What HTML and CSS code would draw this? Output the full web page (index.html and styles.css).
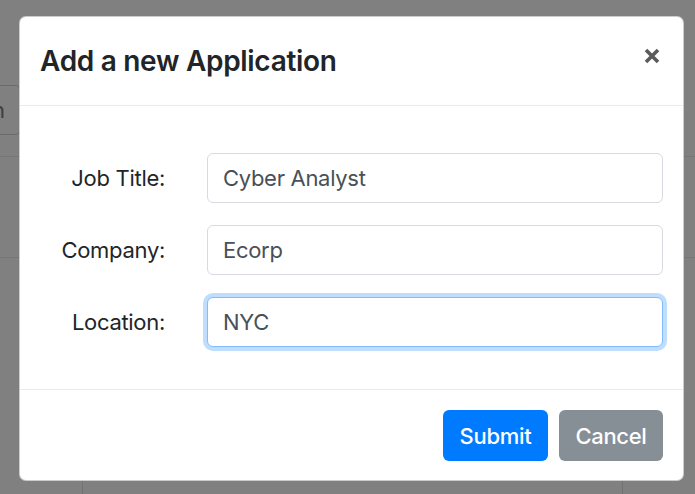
FILE: index.html
```html
<!DOCTYPE html>
<html lang="en">
<head>
<meta charset="utf-8">
<title>Add a new Application</title>
<link rel="stylesheet" href="styles.css">
</head>
<body>
<div class="page">
  <div class="search"><span>n</span></div>
  <div class="row-line first"></div>
  <div class="row-line"></div>
  <div class="table">
    <div class="col"></div>
    <div class="col"></div>
    <div class="col"></div>
  </div>
</div>

<div class="modal">
  <div class="modal-header">
    <h5 class="modal-title">Add a new Application</h5>
    <button class="close" aria-label="Close">
      <svg width="16" height="16" viewBox="0 0 16 16"><path d="M2 2 L14 14 M14 2 L2 14" stroke="#5b5b5b" stroke-width="3.6" stroke-linecap="butt"/></svg>
    </button>
  </div>
  <div class="modal-body">
    <label class="form-label">Job Title:</label>
    <input class="form-control" type="text" value="Cyber Analyst">
    <label class="form-label">Company:</label>
    <input class="form-control" type="text" value="Ecorp">
    <label class="form-label">Location:</label>
    <input class="form-control is-focused" type="text" value="NYC">
  </div>
  <div class="modal-footer">
    <button class="btn btn-primary">Submit</button>
    <button class="btn btn-secondary">Cancel</button>
  </div>
</div>
</body>
</html>
```

FILE: styles.css
```css
html, body {
  margin: 0;
  padding: 0;
}
body {
  width: 695px;
  height: 494px;
  overflow: hidden;
  background: #808080;
  font-family: Inter, "Liberation Sans", sans-serif;
  position: relative;
}

/* dimmed page behind the modal */
.page {
  display: flex;
  flex-direction: column;
  height: 494px;
  padding-top: 85px;
  box-sizing: border-box;
}
.search {
  margin-left: -60px;
  width: 80px;
  height: 50px;
  box-sizing: border-box;
  border: 1px solid #686b6e;
  border-radius: 4px;
  display: flex;
  align-items: center;
  justify-content: flex-end;
  padding-right: 14px;
  font-size: 22px;
  color: #3c3f42;
}
.row-line {
  height: 1px;
  background: #767676;
  margin-top: 100px;
}
.row-line.first {
  margin-top: 21px;
}
.table {
  flex: 1;
  display: grid;
  grid-template-columns: 82px 540px 1fr;
}
.table .col + .col {
  border-left: 1px solid #727272;
}

/* modal */
.modal {
  position: absolute;
  left: 19px;
  top: 16px;
  width: 665px;
  box-sizing: border-box;
  background: #fff;
  border: 1px solid rgba(0, 0, 0, 0.2);
  border-radius: 7px;
  color: #212529;
}
.modal-header {
  display: flex;
  align-items: center;
  justify-content: space-between;
  padding: 23px 23px 23px 20px;
  border-bottom: 1px solid #e9ecef;
}
.modal-title {
  margin: 0;
  font-size: 28px;
  line-height: 42px;
  font-weight: 600;
  color: #212529;
  letter-spacing: -0.3px;
}
.close {
  border: 0;
  background: transparent;
  padding: 0;
  width: 16px;
  height: 16px;
  display: flex;
  margin-top: -10px;
}

.modal-body {
  display: grid;
  grid-template-columns: 125px 456px;
  column-gap: 42px;
  row-gap: 22px;
  align-items: center;
  padding: 47px 20px 42px 20px;
}
.form-label {
  text-align: right;
  font-size: 22px;
  color: #212529;
  letter-spacing: -0.3px;
}
.form-control {
  height: 50px;
  box-sizing: border-box;
  width: 100%;
  margin: 0;
  border: 1px solid #d7dbdf;
  border-radius: 6px;
  padding: 0 15px;
  font-family: Inter, "Liberation Sans", sans-serif;
  font-size: 22px;
  color: #495057;
  letter-spacing: -0.3px;
  background: #fff;
  outline: none;
}
.form-control.is-focused {
  border-color: #80bdff;
  box-shadow: 0 0 0 4px rgba(0, 123, 255, 0.25);
}

.modal-footer {
  display: flex;
  justify-content: flex-end;
  gap: 11px;
  padding: 20px 20px 19px;
  border-top: 1px solid #e9ecef;
}
.btn {
  height: 51px;
  border: 0;
  border-radius: 6px;
  font-family: Inter, "Liberation Sans", sans-serif;
  font-size: 22px;
  font-weight: 500;
  color: #fff;
  padding: 0;
  letter-spacing: -0.3px;
}
.btn-primary {
  width: 105px;
  background: #007bff;
}
.btn-secondary {
  width: 104px;
  background: #868e96;
}
```
